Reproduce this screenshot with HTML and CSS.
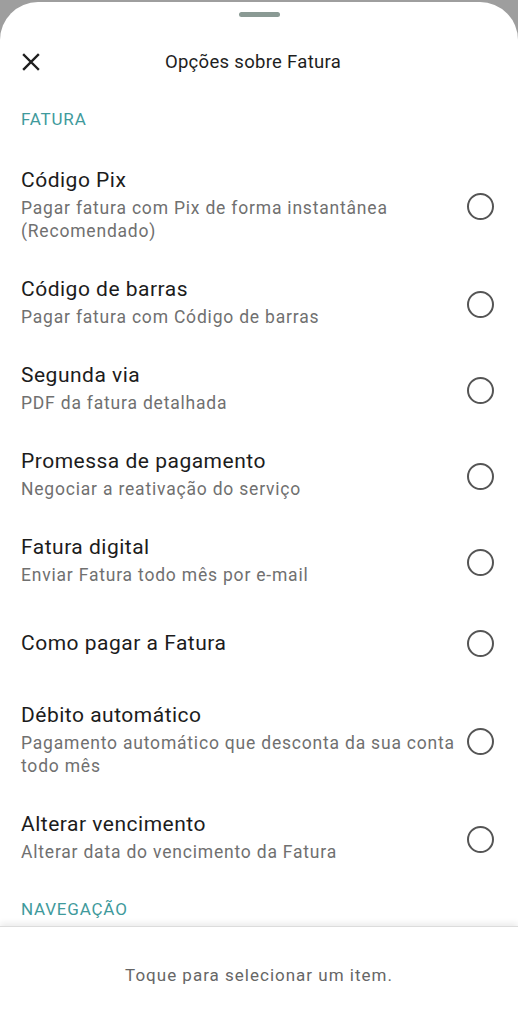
FILE: index.html
```html
<!DOCTYPE html>
<html lang="pt-BR">
<head>
  <meta charset="UTF-8" />
  <meta name="viewport" content="width=device-width, initial-scale=1.0"/>
  <title>Opções sobre Fatura</title>
  <link rel="stylesheet" href="styles.css">
</head>
<body>
  <div class="sheet">
    <div class="handle"></div>

    <div class="topbar">
      <button class="close-btn" aria-label="Fechar">
        <svg width="18" height="18" viewBox="0 0 18 18">
          <path d="M2 2 L16 16 M16 2 L2 16" stroke="#1e1e1e" stroke-width="2.4" stroke-linecap="square" fill="none"/>
        </svg>
      </button>
      <h1>Opções sobre Fatura</h1>
    </div>

    <div class="list">
      <div class="section">FATURA</div>

      <label class="item">
        <div class="text">
          <div class="title">Código Pix</div>
          <div class="sub">Pagar fatura com Pix de forma instantânea (Recomendado)</div>
        </div>
        <span class="radio"></span>
      </label>

      <label class="item">
        <div class="text">
          <div class="title">Código de barras</div>
          <div class="sub">Pagar fatura com Código de barras</div>
        </div>
        <span class="radio"></span>
      </label>

      <label class="item">
        <div class="text">
          <div class="title">Segunda via</div>
          <div class="sub">PDF da fatura detalhada</div>
        </div>
        <span class="radio"></span>
      </label>

      <label class="item">
        <div class="text">
          <div class="title">Promessa de pagamento</div>
          <div class="sub">Negociar a reativação do serviço</div>
        </div>
        <span class="radio"></span>
      </label>

      <label class="item">
        <div class="text">
          <div class="title">Fatura digital</div>
          <div class="sub">Enviar Fatura todo mês por e-mail</div>
        </div>
        <span class="radio"></span>
      </label>

      <label class="item single">
        <div class="text">
          <div class="title">Como pagar a Fatura</div>
        </div>
        <span class="radio"></span>
      </label>

      <label class="item">
        <div class="text">
          <div class="title">Débito automático</div>
          <div class="sub">Pagamento automático que desconta da sua conta todo mês</div>
        </div>
        <span class="radio"></span>
      </label>

      <label class="item">
        <div class="text">
          <div class="title">Alterar vencimento</div>
          <div class="sub">Alterar data do vencimento da Fatura</div>
        </div>
        <span class="radio"></span>
      </label>

      <div class="section">NAVEGAÇÃO</div>
    </div>

    <div class="footer">Toque para selecionar um item.</div>
  </div>
</body>
</html>
```

FILE: styles.css
```css
* {
  margin: 0;
  padding: 0;
  box-sizing: border-box;
}

body {
  height: 1024px;
  background-color: #9e9e9e;
  font-family: Roboto, "Noto Sans", sans-serif;
  overflow: hidden;
  padding-top: 2px;
}

.sheet {
  height: 1022px;
  background-color: #fff;
  border-radius: 38px 38px 0 0;
  display: flex;
  flex-direction: column;
  overflow: hidden;
}

.handle {
  width: 41px;
  height: 5px;
  border-radius: 3px;
  background-color: #8a9a94;
  margin: 10px auto 0;
  flex-shrink: 0;
}

.topbar {
  height: 72px;
  padding-top: 18px;
  display: flex;
  align-items: center;
  flex-shrink: 0;
}

.close-btn {
  border: none;
  background: none;
  width: 18px;
  height: 18px;
  margin-left: 22px;
  display: flex;
}

.topbar h1 {
  flex: 1;
  text-align: center;
  font-size: 18.5px;
  font-weight: 400;
  letter-spacing: 0.3px;
  color: #1e1e1e;
  margin-right: 52px;
}

.list {
  flex: 1;
  overflow: hidden;
}

.section {
  height: 60px;
  display: flex;
  align-items: center;
  padding-left: 21px;
  font-size: 17px;
  letter-spacing: 0.8px;
  color: #3f9a9c;
}

.item {
  display: flex;
  align-items: center;
  gap: 4px;
  padding: 18px 24px 15px 21px;
}

.item.single {
  min-height: 82px;
  padding: 16px 24px 16px 21px;
}

.text {
  flex: 1;
}

.title {
  font-size: 21px;
  line-height: 26px;
  letter-spacing: 0.5px;
  color: #1c1c1c;
  margin-bottom: 4px;
}

.single .title {
  margin-bottom: 0;
}

.sub {
  font-size: 17.5px;
  line-height: 23px;
  letter-spacing: 0.8px;
  color: #707070;
}

.radio {
  width: 27px;
  height: 27px;
  border: 2.5px solid #555;
  border-radius: 50%;
  flex-shrink: 0;
  margin-top: 3px;
}

.single .radio {
  margin-top: 0;
}

.footer {
  height: 98px;
  flex-shrink: 0;
  display: flex;
  align-items: center;
  justify-content: center;
  font-size: 17px;
  letter-spacing: 1px;
  color: #666;
  border-top: 1px solid #dcdcdc;
  box-shadow: 0 -3px 6px rgba(0, 0, 0, 0.08);
  padding-bottom: 2px;
}
```
